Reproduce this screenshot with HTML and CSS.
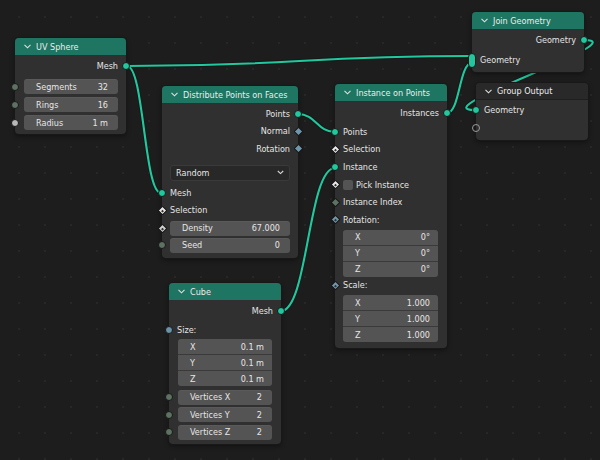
FILE: index.html
```html
<!DOCTYPE html>
<html>
<head>
<meta charset="utf-8">
<link rel="stylesheet" href="styles.css">
</head>
<body>
<div class="canvas">
  <svg class="links" width="600" height="460" viewBox="0 0 600 460">
    <g class="wire-shadow">
      <path d="M127,66 C299,66 300,56 472,56"/>
      <path d="M127,66 C144,66 144,193 161,193"/>
      <path d="M298,114 C316,114 317,132 335,132"/>
      <path d="M281,311 C308,311 308,168 335,168"/>
      <path d="M447,113 C460,113 459,63 472,63"/>
      <path d="M584,40 C638,40 421,110 475,110"/>
    </g>
    <g class="wire">
      <path d="M127,66 C299,66 300,56 472,56"/>
      <path d="M127,66 C144,66 144,193 161,193"/>
      <path d="M298,114 C316,114 317,132 335,132"/>
      <path d="M281,311 C308,311 308,168 335,168"/>
      <path d="M447,113 C460,113 459,63 472,63"/>
      <path d="M584,40 C638,40 421,110 475,110"/>
    </g>
  </svg>

  <!-- UV Sphere -->
  <div class="node n-uv">
    <div class="hdr"><svg class="chev" width="7" height="5" viewBox="0 0 7 5"><polyline points="0.5,0.8 3.5,3.8 6.5,0.8"/></svg><span>UV Sphere</span></div>
    <div class="body uv-body">
      <div class="row out">Mesh<i class="sock out geo"></i></div>
      <div class="frow first"><i class="sock in int"></i><div class="field"><span>Segments</span><span>32</span></div></div>
      <div class="frow"><i class="sock in int"></i><div class="field"><span>Rings</span><span>16</span></div></div>
      <div class="frow"><i class="sock in flt"></i><div class="field"><span>Radius</span><span>1 m</span></div></div>
    </div>
  </div>

  <!-- Distribute Points on Faces -->
  <div class="node n-dist">
    <div class="hdr"><svg class="chev" width="7" height="5" viewBox="0 0 7 5"><polyline points="0.5,0.8 3.5,3.8 6.5,0.8"/></svg><span>Distribute Points on Faces</span></div>
    <div class="body dist-body">
      <div class="row out">Points<i class="sock out geo"></i></div>
      <div class="row out">Normal<i class="sock out dia vec"></i></div>
      <div class="row out">Rotation<i class="sock out dia vec"></i></div>
      <div class="dropdown"><span>Random</span><svg width="7" height="5" viewBox="0 0 7 5"><polyline points="0.8,1 3.5,3.6 6.2,1"/></svg></div>
      <div class="row in mesh-in"><i class="sock in geo"></i>Mesh</div>
      <div class="row in"><i class="sock in dia dot bool"></i>Selection</div>
      <div class="frow density"><i class="sock in dia dot flt"></i><div class="field"><span>Density</span><span>67.000</span></div></div>
      <div class="frow seed"><i class="sock in int"></i><div class="field"><span>Seed</span><span>0</span></div></div>
    </div>
  </div>

  <!-- Instance on Points -->
  <div class="node n-inst">
    <div class="hdr"><svg class="chev" width="7" height="5" viewBox="0 0 7 5"><polyline points="0.5,0.8 3.5,3.8 6.5,0.8"/></svg><span>Instance on Points</span></div>
    <div class="body inst-body">
      <div class="row out">Instances<i class="sock out geo"></i></div>
      <div class="row in pts"><i class="sock in geo"></i>Points</div>
      <div class="row in"><i class="sock in dia dot bool"></i>Selection</div>
      <div class="row in"><i class="sock in geo"></i>Instance</div>
      <div class="row in"><i class="sock in dia dot bool"></i><span class="check"></span>Pick Instance</div>
      <div class="row in"><i class="sock in dia int"></i>Instance Index</div>
      <div class="row in"><i class="sock in dia dot vec"></i>Rotation:</div>
      <div class="vbox">
        <div class="vf"><span>X</span><span>0°</span></div>
        <div class="vf"><span>Y</span><span>0°</span></div>
        <div class="vf"><span>Z</span><span>0°</span></div>
      </div>
      <div class="row in"><i class="sock in dia dot vec"></i>Scale:</div>
      <div class="vbox">
        <div class="vf"><span>X</span><span>1.000</span></div>
        <div class="vf"><span>Y</span><span>1.000</span></div>
        <div class="vf"><span>Z</span><span>1.000</span></div>
      </div>
    </div>
  </div>

  <!-- Cube -->
  <div class="node n-cube">
    <div class="hdr"><svg class="chev" width="7" height="5" viewBox="0 0 7 5"><polyline points="0.5,0.8 3.5,3.8 6.5,0.8"/></svg><span>Cube</span></div>
    <div class="body cube-body">
      <div class="row out">Mesh<i class="sock out geo"></i></div>
      <div class="row in size"><i class="sock in vecc"></i>Size:</div>
      <div class="vbox cbox">
        <div class="vf"><span>X</span><span>0.1 m</span></div>
        <div class="vf"><span>Y</span><span>0.1 m</span></div>
        <div class="vf"><span>Z</span><span>0.1 m</span></div>
      </div>
      <div class="frow vx"><i class="sock in int"></i><div class="field"><span>Vertices X</span><span>2</span></div></div>
      <div class="frow vy"><i class="sock in int"></i><div class="field"><span>Vertices Y</span><span>2</span></div></div>
      <div class="frow vy"><i class="sock in int"></i><div class="field"><span>Vertices Z</span><span>2</span></div></div>
    </div>
  </div>

  <!-- Join Geometry -->
  <div class="node n-join">
    <div class="hdr"><svg class="chev" width="7" height="5" viewBox="0 0 7 5"><polyline points="0.5,0.8 3.5,3.8 6.5,0.8"/></svg><span>Join Geometry</span></div>
    <div class="body join-body">
      <div class="row out">Geometry<i class="sock out geo"></i></div>
      <div class="row in jin"><i class="pill"></i>Geometry</div>
    </div>
  </div>

  <!-- Group Output -->
  <div class="node n-gout">
    <div class="hdr dark"><svg class="chev" width="7" height="5" viewBox="0 0 7 5"><polyline points="0.5,0.8 3.5,3.8 6.5,0.8"/></svg><span>Group Output</span></div>
    <div class="body gout-body">
      <div class="row in"><i class="sock in geo"></i>Geometry</div>
      <div class="row in"><i class="sock in empty"></i></div>
    </div>
  </div>
</div>
</body>
</html>
```

FILE: styles.css
```css
* { box-sizing: border-box; }
html, body { margin: 0; padding: 0; }
body {
  background: #1d1d1d;
  font-family: "DejaVu Sans Condensed", "DejaVu Sans", sans-serif;
  font-size: 9px;
  color: #e4e4e4;
}
.canvas {
  position: relative;
  width: 600px;
  height: 460px;
  overflow: hidden;
  background-color: #1d1d1d;
  background-image: radial-gradient(circle, #272727 0.8px, transparent 1.2px);
  background-size: 26px 26px;
  background-position: 6px 4px;
}
.links { position: absolute; left: 0; top: 0; }
.links path { fill: none; }
.wire-shadow path { stroke: #141414; stroke-width: 4; opacity: .6; }
.wire path { stroke: #21c89e; stroke-width: 2.1; }

.node {
  position: absolute;
  background: #303030;
  border-radius: 4px;
  box-shadow: 0 0 0 1px #181818, 0 2px 5px rgba(0,0,0,.45);
}
.n-uv { left: 15px; top: 38px; width: 111px; }
.n-dist { left: 162px; top: 86px; width: 136px; }
.n-inst { left: 335px; top: 84px; width: 112px; }
.n-cube { left: 169px; top: 283px; width: 112px; }
.n-join { left: 472px; top: 12px; width: 112px; }
.n-gout { left: 476px; top: 83px; width: 112px; }

.hdr {
  height: 17px;
  background: #1e7561;
  border-radius: 4px 4px 0 0;
  display: flex;
  align-items: center;
  gap: 5px;
  padding-left: 9px;
  color: #ececec;
  white-space: nowrap;
}
.hdr.dark { background: #292929; border-bottom: 1px solid #1f1f1f; }
.chev polyline { fill: none; stroke: #e0e0e0; stroke-width: 1.1; }

.body { display: flex; flex-direction: column; }
.row {
  position: relative;
  height: 17.6px;
  display: flex;
  align-items: center;
  padding: 0 8px;
  white-space: nowrap;
}
.row.out { justify-content: flex-end; }

.sock {
  position: absolute;
  top: 50%;
  width: 8px;
  height: 8px;
  margin-top: -4px;
  border-radius: 50%;
  border: 1px solid #171717;
}
.sock.out { right: -4px; }
.sock.in { left: -4px; }
.sock.geo { background: #21c89e; }
.sock.int { background: #5d7262; }
.sock.flt { background: #b8b8b8; }
.sock.vecc { background: #6b93a8; }
.sock.empty { background: transparent; border: 1px solid #9a9a9a; }
.sock.dia {
  border-radius: 1px;
  width: 7px;
  height: 7px;
  margin-top: -3.5px;
  transform: rotate(45deg);
}
.sock.dia.out { right: -3.5px; }
.sock.dia.in { left: -3.5px; }
.sock.dia.vec { background: #7196ab; }
.sock.dia.int { background: #5d7262; }
.sock.dia.bool { background: #e8e8e8; }
.sock.dia.flt { background: #cfcfcf; }
.sock.dot::after {
  content: "";
  position: absolute;
  left: 50%; top: 50%;
  width: 2px; height: 2px;
  margin: -1px 0 0 -1px;
  background: #303030;
}

.frow { position: relative; padding: 0 8px 0 9px; margin-top: 3px; }
.frow .sock { top: 50%; }
.field {
  height: 15px;
  background: #545454;
  border-radius: 3px;
  display: flex;
  justify-content: space-between;
  align-items: center;
  padding: 0 10px 0 12px;
  color: #e6e6e6;
  white-space: nowrap;
  box-shadow: inset 0 1px 0 rgba(255,255,255,.04);
}

/* UV sphere */
.uv-body { padding: 2px 0 4px; }
.uv-body .row.out { height: 18px; }
.uv-body .frow.first { margin-top: 4px; }

/* Distribute */
.dist-body { padding: 2px 0 5px; }
.dropdown {
  margin: 7px 8px 0 8px;
  height: 16px;
  background: #282828;
  border: 1px solid #3a3a3a;
  border-radius: 3px;
  display: flex;
  align-items: center;
  justify-content: space-between;
  padding: 0 5px 0 5px;
}
.dropdown polyline { fill: none; stroke: #d8d8d8; stroke-width: 1.1; }
.mesh-in { margin-top: 3px; }
.frow.density { margin-top: 1.6px; }
.frow.seed { margin-top: 2px; }
.n-dist .frow { padding: 0 8px 0 8px; }

/* Instance */
.inst-body { padding: 3px 0 5.5px; }
.row.pts { margin-top: 1.5px; }
.check {
  width: 10px;
  height: 10px;
  background: #545454;
  border-radius: 2px;
  margin-right: 3px;
  margin-left: 0;
}
.vbox {
  margin: 1px 9px 0 8px;
  border-radius: 3px;
  overflow: hidden;
  display: flex;
  flex-direction: column;
  gap: 1px;
  background: #3a3a3a;
}
.vf {
  height: 15px;
  background: #545454;
  display: flex;
  justify-content: space-between;
  align-items: center;
  padding: 0 8px 0 12px;
  color: #e6e6e6;
}

/* Cube */
.cube-body { padding: 2px 0 4px; }
.row.size { margin-top: 2px; }
.cbox { margin: 0 9px 0 9px; }
.frow.vx { margin-top: 3.5px; }
.frow.vy { margin-top: 2.5px; }
.n-cube .frow { padding: 0 9px 0 9px; }

/* Join */
.join-body { padding: 2px 0 2.5px; }
.join-body .row { height: 18px; }
.jin { margin-top: 2px; }
.pill {
  position: absolute;
  left: -4px;
  top: 50%;
  width: 8px;
  height: 15px;
  margin-top: -7.5px;
  border-radius: 4px;
  background: #21c89e;
  border: 1px solid #171717;
}

/* Group output */
.gout-body { padding: 1.5px 0 2.5px; }
.gout-body .row { height: 17.8px; }
```
